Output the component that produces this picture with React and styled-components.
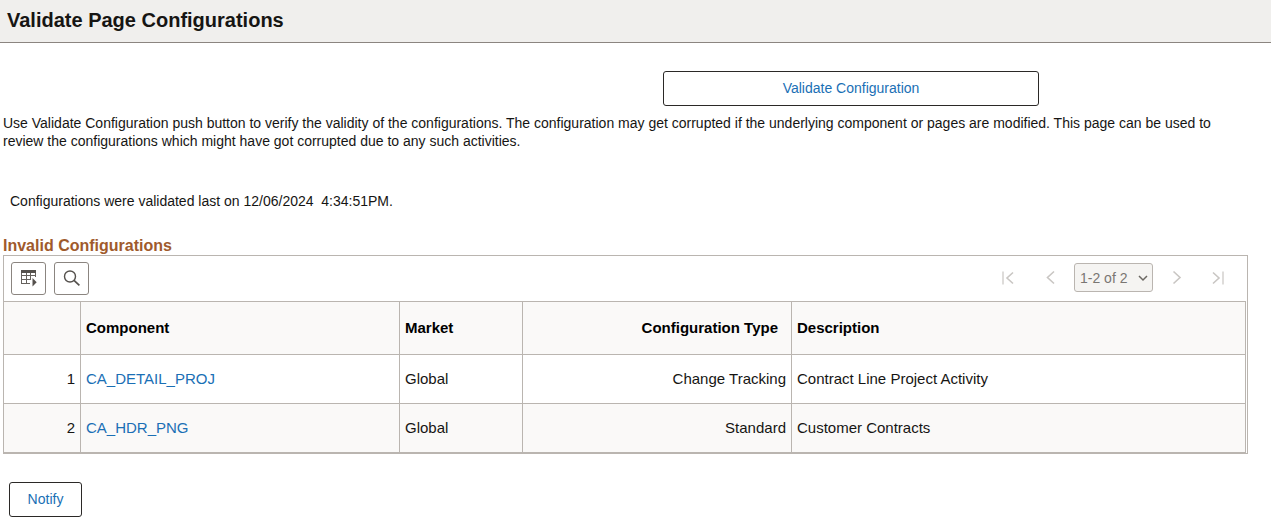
import React, { useState } from "react";
import styled, { createGlobalStyle } from "styled-components";

const GlobalStyle = createGlobalStyle`
    * {
        box-sizing: border-box;
    }
    body {
        margin: 0;
        background: #fff;
        color: #161513;
        font-family: "Liberation Sans", Arial, sans-serif;
        font-size: 14px;
        line-height: 18px;
    }
`;

const Header = styled.header`
    padding: 8px 7px 10px;
    background: #f0efed;
    border-bottom: 1px solid #8b8580;
`;

const Title = styled.h1`
    margin: 0;
    font-size: 20px;
    line-height: 24px;
`;

const Main = styled.main`
    padding: 28px 23px 9px 3px;
`;

const ButtonRow = styled.div`
    display: flex;
    padding-left: ${({ $indent }) => $indent};
`;

const Button = styled.button`
    width: ${({ $width }) => $width};
    height: 35px;
    padding: 0 0 2px;
    border: 1px solid #2b2927;
    border-radius: 3px;
    background: #fff;
    color: #1a6fb5;
    font: inherit;
    cursor: pointer;
`;

const Intro = styled.p`
    margin: 8px 0 42px;
`;

const Status = styled.p`
    margin: 0 7px 26px;
    white-space: pre-wrap;
`;

const GridTitle = styled.h2`
    margin: 0;
    color: #9f5a2c;
    font-size: 16px;
    line-height: 19px;
`;

const Grid = styled.section`
    margin-bottom: 28px;
    border: 1px solid #bab5b0;
`;

const Toolbar = styled.div`
    display: flex;
    justify-content: space-between;
    align-items: center;
    height: 45px;
    padding: 0 15px 0 7px;
`;

const Tools = styled.div`
    display: flex;
    gap: 8px;
`;

const IconButton = styled.button`
    display: flex;
    align-items: center;
    justify-content: center;
    width: 35px;
    height: 33px;
    padding: 0;
    border: 1px solid #8b8580;
    border-radius: 3px;
    background: #fff;
    cursor: pointer;
`;

const Pager = styled.nav`
    display: flex;
    align-items: center;
    gap: 14px;
    padding-bottom: 2px;
`;

const PagerButton = styled.button`
    display: flex;
    align-items: center;
    justify-content: center;
    width: 28px;
    height: 28px;
    padding: 0;
    border: 0;
    background: none;
`;

const RangeWrapper = styled.div`
    display: flex;
    align-items: center;
    margin-left: -4px;
`;

const Range = styled.select`
    appearance: none;
    width: 79px;
    height: 29px;
    padding: 0 0 0 5px;
    border: 1px solid #bab5b0;
    border-radius: 3px;
    background: #f5f4f2;
    color: #7a7672;
    font: inherit;
    opacity: 1;
`;

const Arrow = styled.svg`
    margin-left: -15px;
    pointer-events: none;
`;

const Table = styled.table`
    width: calc(100% - 1px);
    table-layout: fixed;
    border-collapse: separate;
    border-spacing: 0;
    border-top: 1px solid #bab5b0;
    font-size: 15px;
`;

const Col = styled.col`
    width: ${({ $width }) => $width};
`;

const HeadCell = styled.th`
    height: 53px;
    padding: 0 ${({ $right }) => ($right ? "13px" : "5px")} 0 5px;
    border-right: 1px solid #bab5b0;
    border-bottom: 1px solid #bab5b0;
    background: #faf9f8;
    color: #000;
    text-align: ${({ $right }) => ($right ? "right" : "left")};
`;

const Row = styled.tr`
    &:nth-child(even) {
        background: #faf9f8;
    }
`;

const Cell = styled.td`
    height: 49px;
    padding: 0 5px;
    border-right: 1px solid #bab5b0;
    border-bottom: 1px solid #bab5b0;
    text-align: ${({ $right }) => ($right ? "right" : "left")};
`;

const Link = styled.a`
    color: #1a6fb5;
    text-decoration: none;
`;

const rows = [
    {
        component: "CA_DETAIL_PROJ",
        market: "Global",
        type: "Change Tracking",
        description: "Contract Line Project Activity",
    },
    {
        component: "CA_HDR_PNG",
        market: "Global",
        type: "Standard",
        description: "Customer Contracts",
    },
];

const GridIcon = () => (
    <svg width="17" height="17" viewBox="0 0 17 17" fill="none" stroke="#66625e">
        <path d="M1 1.5h15" strokeWidth="3" stroke="#55514d" />
        <path d="M1.5 3v11M6.5 3v11M10.5 3v7M15.5 3v4M1 5.5h15M1 9.5h10M1 13.5h9" />
        <path d="M12.5 8v8.5l4.2-4.2z" fill="#55514d" stroke="none" />
    </svg>
);

const SearchIcon = () => (
    <svg width="17" height="17" viewBox="0 0 17 17" fill="none" stroke="#55514d">
        <circle cx="7" cy="6.5" r="5.5" strokeWidth="1.4" />
        <path d="M11 10.4l5.4 5" strokeWidth="1.7" />
    </svg>
);

const PagerIcon = ({ d, bar }) => (
    <svg width="14" height="16" viewBox="0 0 14 16" fill="none" stroke="#c9c6c3">
        <path d={d} strokeWidth="1.6" />
        {bar && <path d={bar} stroke="#d3d1ce" strokeWidth="1.5" />}
    </svg>
);

export default () => {
    const [range, setRange] = useState("1-2 of 2");

    return (
        <>
            <GlobalStyle />
            <Header>
                <Title>Validate Page Configurations</Title>
            </Header>
            <Main>
                <ButtonRow $indent="660px">
                    <Button type="button" $width="376px">
                        Validate Configuration
                    </Button>
                </ButtonRow>
                <Intro>
                    Use Validate Configuration push button to verify the validity of the
                    configurations. The configuration may get corrupted if the underlying
                    component or pages are modified. This page can be used to review the
                    configurations which might have got corrupted due to any such
                    activities.
                </Intro>
                <Status>{"Configurations were validated last on 12/06/2024  4:34:51PM."}</Status>
                <GridTitle>Invalid Configurations</GridTitle>
                <Grid>
                    <Toolbar>
                        <Tools>
                            <IconButton type="button" aria-label="Grid actions">
                                <GridIcon />
                            </IconButton>
                            <IconButton type="button" aria-label="Find">
                                <SearchIcon />
                            </IconButton>
                        </Tools>
                        <Pager>
                            <PagerButton type="button" aria-label="First" disabled>
                                <PagerIcon d="M12 2.5L6 8l6 5.5" bar="M2 1.5v13" />
                            </PagerButton>
                            <PagerButton type="button" aria-label="Previous" disabled>
                                <PagerIcon d="M11 1.5L4.5 7.5l6.5 6" />
                            </PagerButton>
                            <RangeWrapper>
                                <Range
                                    aria-label="Rows"
                                    value={range}
                                    onChange={(e) => setRange(e.target.value)}
                                    disabled
                                >
                                    <option>1-2 of 2</option>
                                </Range>
                                <Arrow width="10" height="8" viewBox="0 0 10 8" fill="none" stroke="#6b6762" strokeWidth="1.5">
                                    <path d="M1 2l4 4 4-4" />
                                </Arrow>
                            </RangeWrapper>
                            <PagerButton type="button" aria-label="Next" disabled>
                                <PagerIcon d="M4.5 1.5l6.5 6-6.5 6" />
                            </PagerButton>
                            <PagerButton type="button" aria-label="Last" disabled>
                                <PagerIcon d="M2 2.5L8 8l-6 5.5" bar="M12 1.5v13" />
                            </PagerButton>
                        </Pager>
                    </Toolbar>
                    <Table>
                        <colgroup>
                            <Col $width="77px" />
                            <Col $width="319px" />
                            <Col $width="123px" />
                            <Col $width="269px" />
                            <Col />
                        </colgroup>
                        <thead>
                            <tr>
                                <HeadCell />
                                <HeadCell>Component</HeadCell>
                                <HeadCell>Market</HeadCell>
                                <HeadCell $right>Configuration Type</HeadCell>
                                <HeadCell>Description</HeadCell>
                            </tr>
                        </thead>
                        <tbody>
                            {rows.map((row, idx) => (
                                <Row key={row.component}>
                                    <Cell $right>{idx + 1}</Cell>
                                    <Cell>
                                        <Link href="#">{row.component}</Link>
                                    </Cell>
                                    <Cell>{row.market}</Cell>
                                    <Cell $right>{row.type}</Cell>
                                    <Cell>{row.description}</Cell>
                                </Row>
                            ))}
                        </tbody>
                    </Table>
                </Grid>
                <ButtonRow $indent="6px">
                    <Button type="button" $width="73px">
                        Notify
                    </Button>
                </ButtonRow>
            </Main>
        </>
    );
};
